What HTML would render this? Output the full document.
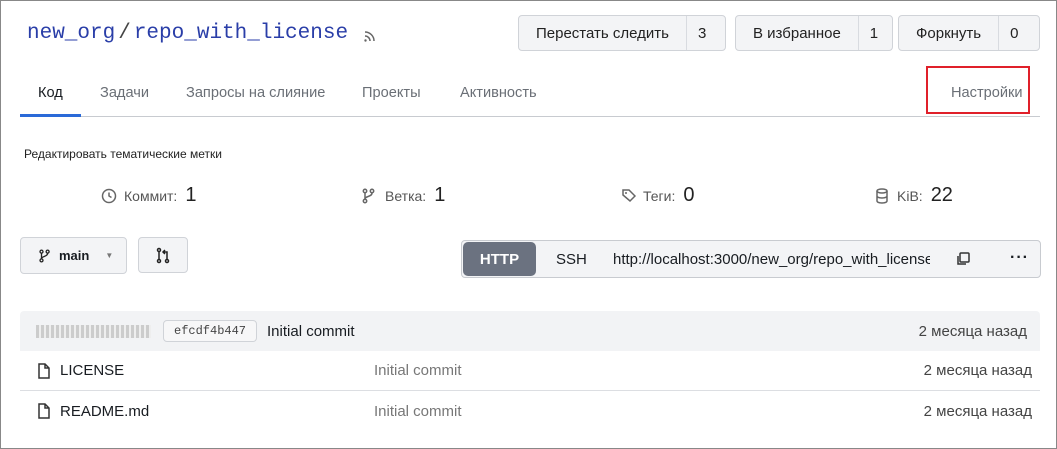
<!DOCTYPE html>
<html><head><meta charset="utf-8"><style>
*{box-sizing:border-box;margin:0;padding:0}
body{width:1057px;height:449px;background:#fff;font-family:"Liberation Sans",sans-serif;color:#181c21;position:relative;overflow:hidden}
.frame{position:absolute;left:0;top:0;width:1057px;height:449px;border:1px solid #888;pointer-events:none}
.a{position:absolute}
.btn{position:absolute;top:15px;height:36px;border:1px solid #d0d3d8;border-radius:4px;background:#f3f4f6;display:flex;font-size:15px;color:#222}
.btn span{display:flex;align-items:center;padding:0 17px}
.btn span+span{border-left:1px solid #d8dbe0;padding:0 11px}
.tab{position:absolute;top:85px;font-size:14.6px;color:#6a6f76}
.ico{stroke:#666;fill:none;stroke-width:1.5}
.st{position:absolute;top:184px;display:flex;align-items:center;font-size:14px;color:#555}
.st b{font-weight:normal;font-size:20px;color:#222;margin-left:8px}
.row{position:absolute;left:20px;width:1020px;height:40px;font-size:15px;display:flex;align-items:center}
</style></head><body>
<div class="a" style="left:27px;top:22px;font-family:'Liberation Mono',monospace;font-size:21px;color:#2a3ea8">new_org<span style="color:#444;margin:0 3px">/</span>repo_with_license</div>
<svg class="a" style="left:362px;top:28px" width="16" height="16" viewBox="0 0 16 16"><path d="M3 4a9 9 0 0 1 9 9M3 8a5 5 0 0 1 5 5" class="ico"/><circle cx="3.5" cy="12.5" r="1.2" fill="#666"/></svg>
<div class="btn" style="left:518px;width:208px"><span>Перестать следить</span><span>3</span></div>
<div class="btn" style="left:735px;width:158px"><span>В избранное</span><span>1</span></div>
<div class="btn" style="left:898px;width:142px"><span>Форкнуть</span><span>0</span></div>
<div class="tab" style="left:38px;color:#181c21">Код</div>
<div class="tab" style="left:100px">Задачи</div>
<div class="tab" style="left:186px">Запросы на слияние</div>
<div class="tab" style="left:362px">Проекты</div>
<div class="tab" style="left:460px">Активность</div>
<div class="tab" style="left:951px">Настройки</div>
<div class="a" style="left:926px;top:66px;width:104px;height:48px;border:2px solid #e0202a"></div>
<div class="a" style="left:20px;top:116px;width:1020px;height:1px;background:#c8cbd0"></div>
<div class="a" style="left:20px;top:114px;width:61px;height:3px;background:#2a6ad8"></div>
<div class="a" style="left:24px;top:147px;font-size:12px;color:#222">Редактировать тематические метки</div>
<div class="st" style="left:100px"><svg width="18" height="18" viewBox="0 0 18 18"><circle cx="9" cy="9" r="6.5" class="ico"/><path d="M9 5.5V9l2.5 1.5" class="ico"/></svg><span style="margin-left:6px">Коммит:</span><b>1</b></div>
<div class="st" style="left:361px"><svg width="16" height="18" viewBox="0 0 16 18"><circle cx="4" cy="4" r="1.7" class="ico"/><circle cx="4" cy="14" r="1.7" class="ico"/><circle cx="11" cy="4" r="1.7" class="ico"/><path d="M4 6v6M11 6c0 4-7 3-7 6" class="ico"/></svg><span style="margin-left:8px">Ветка:</span><b>1</b></div>
<div class="st" style="left:621px"><svg width="16" height="18" viewBox="0 0 16 18"><path d="M2 3h6l6 6-5 5-7-6z" class="ico"/><circle cx="5" cy="6" r="1" fill="#666"/></svg><span style="margin-left:6px">Теги:</span><b>0</b></div>
<div class="st" style="left:875px"><svg width="14" height="18" viewBox="0 0 14 18"><ellipse cx="7" cy="4" rx="5" ry="2" class="ico"/><path d="M2 4v10c0 2.6 10 2.6 10 0V4M2 9c0 2.6 10 2.6 10 0" class="ico"/></svg><span style="margin-left:8px">KiB:</span><b>22</b></div>
<div class="a" style="left:20px;top:237px;width:107px;height:37px;border:1px solid #d0d3d8;border-radius:4px;background:#f3f4f6;display:flex;align-items:center;font-size:13px;font-weight:bold;padding-left:17px"><svg width="14" height="16" viewBox="0 0 16 18"><circle cx="4" cy="4" r="1.7" class="ico" style="stroke:#222"/><circle cx="4" cy="14" r="1.7" class="ico" style="stroke:#222"/><circle cx="11" cy="4" r="1.7" class="ico" style="stroke:#222"/><path d="M4 6v6M11 6c0 4-7 3-7 6" class="ico" style="stroke:#222"/></svg><span style="margin-left:7px">main</span><span style="margin-left:16px;font-size:8px;color:#777">▼</span></div>
<div class="a" style="left:138px;top:237px;width:50px;height:36px;border:1px solid #d0d3d8;border-radius:4px;background:#f3f4f6"><svg style="position:absolute;left:16px;top:9px" width="16" height="18" viewBox="0 0 16 18"><circle cx="4" cy="3" r="1.5" class="ico" style="stroke:#222"/><circle cx="4" cy="14" r="1.5" class="ico" style="stroke:#222"/><circle cx="12" cy="14" r="1.5" class="ico" style="stroke:#222"/><path d="M4 5v7M12 12V5H8M10 3L8 5l2 2" class="ico" style="stroke:#222"/></svg></div>
<div class="a" style="left:461px;top:240px;width:580px;height:38px;border:1px solid #c8cbd0;border-radius:4px;background:#f3f4f6"></div>
<div class="a" style="left:463px;top:242px;width:73px;height:34px;border-radius:5px;background:#6b7280;color:#fff;font-weight:bold;font-size:15px;display:flex;align-items:center;justify-content:center">HTTP</div>
<div class="a" style="left:556px;top:251px;font-size:15px">SSH</div>
<div class="a" style="left:613px;top:251px;font-size:15px;width:317px;overflow:hidden;white-space:nowrap">http://localhost:3000/new_org/repo_with_license</div>
<svg class="a" style="left:955px;top:251px" width="16" height="16" viewBox="0 0 16 16"><rect x="5" y="2" width="9" height="9" rx="1" class="ico" style="stroke:#333"/><path d="M3 5v8h8" class="ico" style="stroke:#333"/></svg>
<div class="a" style="left:1010px;top:249px;font-size:16px;font-weight:bold;letter-spacing:1px">···</div>
<div class="row" style="top:311px;background:#f2f3f5;border-radius:4px 4px 0 0">
<div style="margin-left:16px;width:115px;height:13px;background:repeating-linear-gradient(90deg,#ccc 0 3px,#eee 3px 5px)"></div>
<div style="margin-left:12px;border:1px solid #d0d3d8;border-radius:4px;padding:3px 10px;font-family:'Liberation Mono',monospace;font-size:12px;color:#444;background:#f7f7f8">efcdf4b447</div>
<div style="margin-left:10px">Initial commit</div>
<div style="margin-left:auto;margin-right:13px;color:#444">2 месяца назад</div></div>
<div class="row" style="top:351px;border-bottom:1px solid #dcdee2"><svg style="margin-left:17px" width="14" height="16" viewBox="0 0 14 16"><path d="M2 1h6l4 4v10H2zM8 1v4h4" class="ico" style="stroke:#333"/></svg><span style="margin-left:9px">LICENSE</span><span style="position:absolute;left:354px;color:#777">Initial commit</span><span style="margin-left:auto;margin-right:8px;color:#444">2 месяца назад</span></div>
<div class="row" style="top:391px"><svg style="margin-left:17px" width="14" height="16" viewBox="0 0 14 16"><path d="M2 1h6l4 4v10H2zM8 1v4h4" class="ico" style="stroke:#333"/></svg><span style="margin-left:9px">README.md</span><span style="position:absolute;left:354px;color:#777">Initial commit</span><span style="margin-left:auto;margin-right:8px;color:#444">2 месяца назад</span></div>
<div class="frame"></div>
</body></html>
